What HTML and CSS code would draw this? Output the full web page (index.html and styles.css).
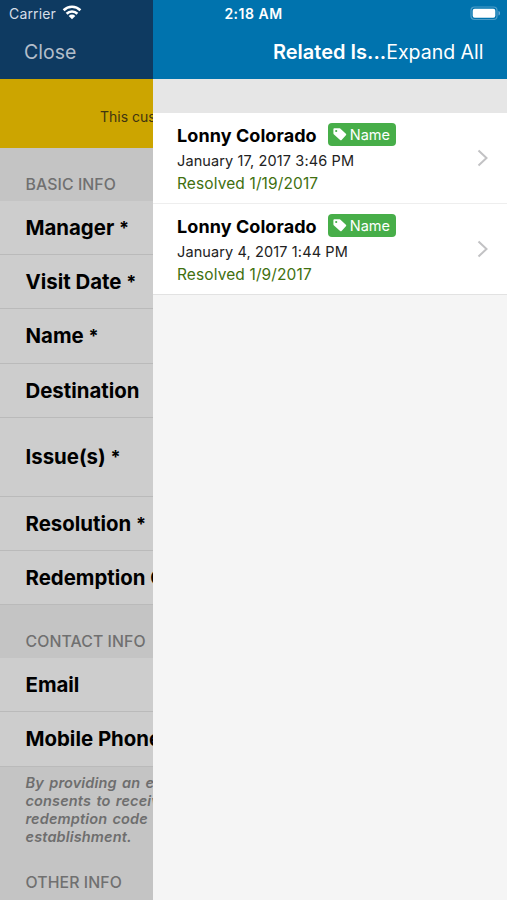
FILE: index.html
```html
<!DOCTYPE html>
<html>
	<head>
		<title>Related Issues</title>
		<meta charset="UTF-8">
		<link rel="stylesheet" href="styles.css">
	</head>
	<body>
		<div id="screen">
			<div id="form">
				<div class="nav"><a>Close</a></div>
				<div class="warning"><span>This cus</span></div>
				<div class="section">BASIC INFO</div>
				<div class="field">Manager <i>*</i></div>
				<div class="field">Visit Date <i>*</i></div>
				<div class="field">Name <i>*</i></div>
				<div class="field">Destination</div>
				<div class="field tall">Issue(s) <i>*</i></div>
				<div class="field">Resolution <i>*</i></div>
				<div class="field">Redemption C</div>
				<div class="section">CONTACT INFO</div>
				<div class="field">Email</div>
				<div class="field">Mobile Phone</div>
				<p class="note">By providing an em<br>consents to receiv<br>redemption code<br>establishment.</p>
				<div class="section other">OTHER INFO</div>
			</div>
			<div id="related">
				<div class="nav">
					<h1>Related Is...</h1>
					<a>Expand All</a>
				</div>
				<div class="gap"></div>
				<div class="issue">
					<div>
						<div class="who">
							<b>Lonny Colorado</b>
							<span class="tag">
								<svg width="14" height="13" viewBox="0 0 14 13"><path fill="#fff" fill-rule="evenodd" d="M1.300 .2H6c.5 0 .8.1 1.200.4l5.700 5.200c.5.5.5 1 0 1.500L8.600 11.900c-.5.5-1 .5-1.500 0L1 6.400C.6 6 .4 5.700.4 5.200V1.200C.4.6.7.2 1.300.2zM3.200 1.900a1.100 1.100 0 1 0 0 2.200 1.100 1.100 0 0 0 0-2.200z"/></svg>
								<span>Name</span>
							</span>
						</div>
						<div class="date">January 17, 2017 3:46 PM</div>
						<div class="resolved">Resolved 1/19/2017</div>
					</div>
					<svg class="arrow" width="12" height="18" viewBox="0 0 12 18"><path d="M1.500 1.500L9.500 9l-8 7.500" fill="none" stroke="#c2c2c4" stroke-width="2"/></svg>
				</div>
				<div class="issue last">
					<div>
						<div class="who">
							<b>Lonny Colorado</b>
							<span class="tag">
								<svg width="14" height="13" viewBox="0 0 14 13"><path fill="#fff" fill-rule="evenodd" d="M1.300 .2H6c.5 0 .8.1 1.200.4l5.700 5.200c.5.5.5 1 0 1.500L8.600 11.900c-.5.5-1 .5-1.500 0L1 6.400C.6 6 .4 5.700.4 5.200V1.200C.4.6.7.2 1.300.2zM3.200 1.900a1.100 1.100 0 1 0 0 2.200 1.100 1.100 0 0 0 0-2.200z"/></svg>
								<span>Name</span>
							</span>
						</div>
						<div class="date">January 4, 2017 1:44 PM</div>
						<div class="resolved">Resolved 1/9/2017</div>
					</div>
					<svg class="arrow" width="12" height="18" viewBox="0 0 12 18"><path d="M1.500 1.500L9.500 9l-8 7.500" fill="none" stroke="#c2c2c4" stroke-width="2"/></svg>
				</div>
			</div>
			<!-- status bar lies over both panels -->
			<div id="status">
				<div class="carrier">
					<span>Carrier</span>
					<svg width="20" height="15" viewBox="0 0 20 15" fill="none" stroke="#fff" stroke-width="2.600"><path d="M1.600 5.200a12 12 0 0 1 16.800 0M4.600 8.700a7.700 7.700 0 0 1 10.800 0"/><path fill="#fff" stroke="none" d="M10 14.200L6.700 10.900a4.700 4.700 0 0 1 6.600 0z"/></svg>
				</div>
				<div class="time">2:18 AM</div>
				<svg class="battery" width="31" height="15" viewBox="0 0 31 15"><rect x="1" y="1" width="26" height="12.500" rx="3.500" fill="none" stroke="#4d9dc8" stroke-width="1.200"/><rect x="2.700" y="2.700" width="22.600" height="9.100" rx="2" fill="#fff"/><path d="M28.500 5v4.500c2-.6 2-3.900 0-4.500z" fill="#6eabd3"/></svg>
			</div>
		</div>
	</body>
</html>
```
FILE: styles.css
```css
/* common */
* {
	box-sizing: border-box; margin: 0; padding: 0;
}
body {
	font-family: "Inter", "Liberation Sans", sans-serif; color: #000; background-color: #F5F5F5;
}
#screen {
	position: relative; display: grid; grid-template-columns: 153px 354px; height: 900px; overflow: hidden;
}
.nav {
	height: 79px; padding-top: 25px; display: flex; align-items: center; font-size: 19.500px; white-space: nowrap;
}
/* status bar */
#status {
	position: absolute; top: 0; left: 0; width: 507px; height: 27px; display: grid; grid-template-columns: 1fr auto 1fr; align-items: center; color: #FFF; font-size: 14px;
} .carrier {
	display: flex; align-items: center; gap: 6px; padding-left: 9px; color: #D6DEE7; letter-spacing: 0.15px;
} .carrier svg {
	margin-top: -2px;
} .time {
	font-weight: 600; letter-spacing: 0.5px;
} .battery {
	justify-self: end; margin-right: 6px;
}
/* form under the shade */
#form {
	background-color: #C4C4C4; overflow: hidden; white-space: nowrap;
} #form .nav {
	background-color: #0E3A61; color: #B3BECA; padding-left: 24px;
} .warning {
	height: 69px; background-color: #CCA500; padding: 29px 0 0 100px; font-size: 14px; line-height: 17px; color: #3F3511;
} .section {
	height: 53px; padding: 27px 0 0 25.500px; font-size: 15.800px; line-height: 20px; font-weight: 500; letter-spacing: 0.100px; color: #707070;
} .field {
	height: 54.200px; padding-left: 25.500px; display: flex; align-items: center; white-space: pre; background-color: #CDCDCD; border-bottom: 1px solid #BABABA; font-size: 20.400px; font-weight: 700;
} .field i {
	font-style: normal; font-size: 18px;
} .tall {
	height: 79px;
} .note {
	padding: 7px 0 0 25.500px; font-size: 14.500px; line-height: 18.300px; font-weight: 600; font-style: italic; letter-spacing: 0.150px; word-spacing: 1.500px; color: #6E6E6E;
} .other {
	padding-top: 26px;
}
/* related issues */
#related .nav {
	background-color: #0073AE; color: #FFF; padding-left: 120px;
} h1 {
	font-size: 20px; font-weight: 600;
} .gap {
	height: 34px; background-color: #E6E6E6;
} .issue {
	height: 91px; padding: 8px 18px 0 24px; display: flex; justify-content: space-between; background-color: #FFF; border-bottom: 1px solid #EEE;
} .last {
	border-color: #E2E2E2;
} .who {
	display: flex; align-items: center; gap: 11px; height: 28px;
} .who b {
	font-size: 18px; font-weight: 700; letter-spacing: 0.080px;
} .tag {
	display: flex; align-items: center; gap: 3px; width: 68.500px; height: 23px; margin-bottom: 1px; padding-left: 5px; border-radius: 4px; background-color: #47AE49; color: #FFF; font-size: 14.500px;
} .date {
	font-size: 14.500px; line-height: 23px; letter-spacing: 0.120px; color: #222;
} .resolved {
	font-size: 15.500px; line-height: 23px; letter-spacing: 0.120px; color: #41700F;
} .arrow {
	margin-top: 28px;
}
```
